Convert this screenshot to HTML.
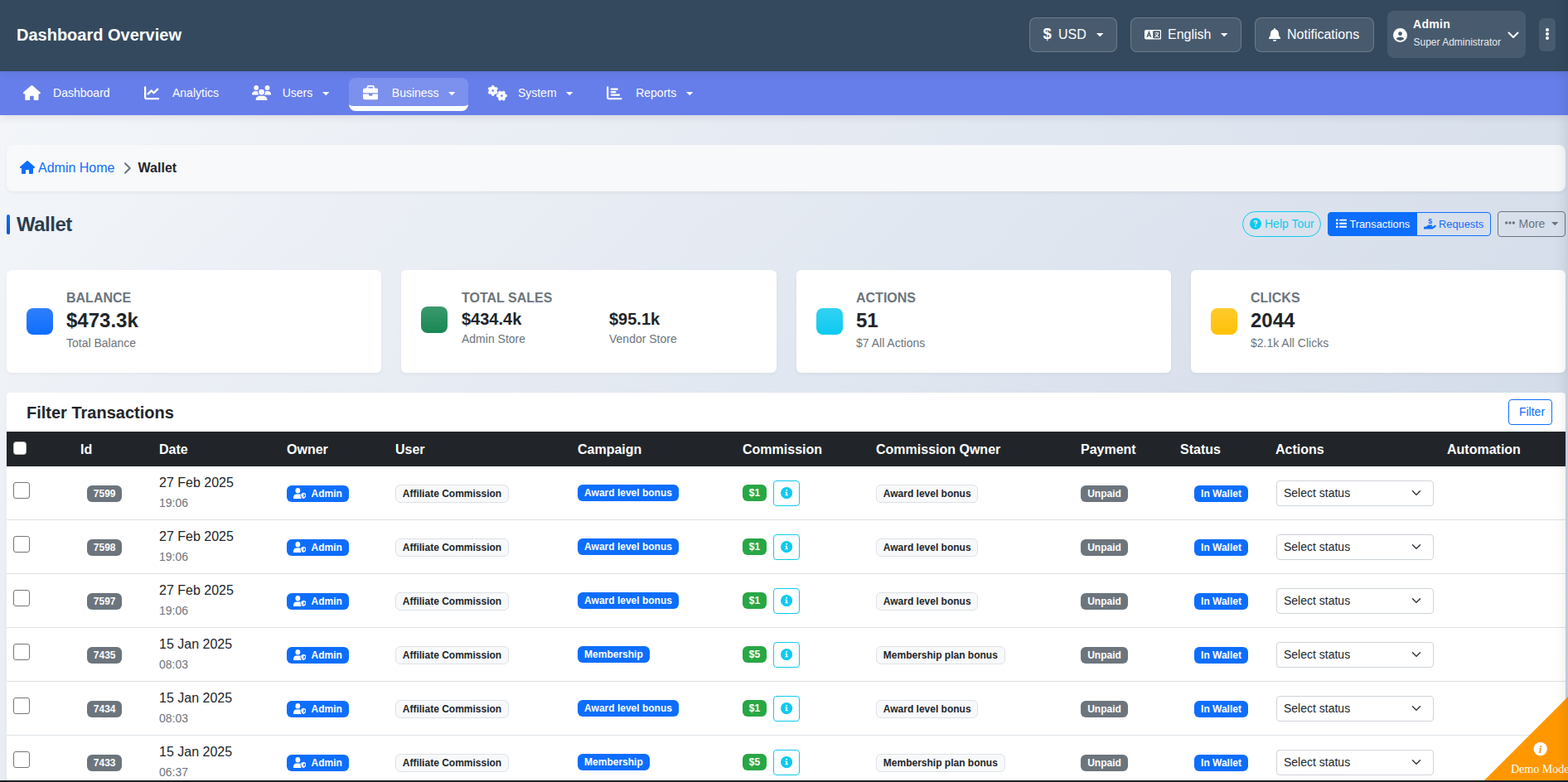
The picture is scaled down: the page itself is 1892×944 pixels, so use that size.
<!DOCTYPE html>
<html lang="en">
<head>
<meta charset="utf-8">
<title>Wallet</title>
<style>
*{box-sizing:border-box}
html,body{margin:0;padding:0}
body{width:1892px;height:944px;overflow:hidden;position:relative;font-family:"Liberation Sans",sans-serif;font-size:16px;line-height:1.5;color:#212529;background:#dfe5ef linear-gradient(135deg,#f5f7fa 0%,#c3cfe2 100%) 0 0/1892px 1640px no-repeat}
.t{position:absolute;white-space:nowrap}
/* ---------- top header ---------- */
.top{position:absolute;left:0;top:0;width:1892px;height:86px;background:#34495e;color:#fff;box-shadow:0 2px 10px rgba(0,0,0,.1);z-index:3}
.top h1{position:absolute;left:20px;top:27px;margin:0;font-size:20px;line-height:30px;font-weight:700;white-space:nowrap}
.hbtn{position:absolute;top:21px;height:42px;border:1px solid rgba(255,255,255,.2);background:rgba(255,255,255,.1);border-radius:8px;color:#fff;font-size:16px;line-height:24px}
.hbtn .t{top:8px}
.userbox{position:absolute;left:1674px;top:13px;width:167px;height:57px;background:rgba(255,255,255,.1);border-radius:8px;color:#fff}
.dots{position:absolute;left:1857px;top:22px;width:20px;height:40px;background:rgba(255,255,255,.1);border-radius:6px}
.dots i{position:absolute;left:8.100px;width:3.800px;height:3.800px;border-radius:1.900px;background:#fff}
/* ---------- nav ---------- */
.nav{z-index:2;position:absolute;left:0;top:86px;width:1892px;height:53px;background:#667eea;box-shadow:0 2px 10px rgba(0,0,0,.1);color:#fff;font-size:14px;line-height:21px}
.nav .t{top:15.500px}
.nav .act{position:absolute;top:8px;height:40px;background:rgba(255,255,255,.15);border-radius:8px;border-bottom:6px solid #fff}
/* ---------- content ---------- */
.crumb{position:absolute;left:8px;top:175px;width:1881px;height:56px;background:#f8f9fa;border-radius:8px;box-shadow:0 2px 4px rgba(0,0,0,.05)}
.crumb .t{top:16px;font-size:16px;line-height:24px}
.ptitle{position:absolute;left:8px;top:259px;width:4px;height:24px;background:linear-gradient(180deg,#0d6efd,#0a58ca);border-radius:2px}
.ptitle h2{position:absolute;left:12px;top:-6px;margin:0;font-size:24px;line-height:36px;font-weight:700;letter-spacing:-.5px;color:#2c3e50;white-space:nowrap}
.btn{position:absolute;font-size:14px;line-height:21px;white-space:nowrap}
.stat{position:absolute;top:326px;height:124px;background:#fff;border-radius:6px;box-shadow:0 2px 4px rgba(0,0,0,.04)}
.stat .ic{position:absolute;left:24px;top:46px;width:32px;height:32px;border-radius:8px}
.stat .lb{position:absolute;left:72px;top:22px;font-size:16px;line-height:24px;font-weight:700;color:#6c757d;text-transform:uppercase;white-space:nowrap}
.stat .vl{position:absolute;left:72px;top:46px;font-size:24px;line-height:29px;font-weight:700;color:#212529;white-space:nowrap}
.stat .sb{position:absolute;left:72px;top:78px;font-size:14px;line-height:21px;color:#6c757d;white-space:nowrap}
.stat .v2{top:47px;font-size:20px;line-height:24px}
.stat .s2{top:73px}
/* ---------- table card ---------- */
.tcard{position:absolute;left:8px;top:474px;width:1881px;height:480px;background:#fff;border-radius:4px 4px 0 0;box-shadow:0 2px 4px rgba(0,0,0,.04)}
.tcard h3{position:absolute;left:24px;top:9px;margin:0;font-size:20px;line-height:30px;font-weight:700;color:#212529;white-space:nowrap}
.fbtn{position:absolute;left:1812px;top:8px;width:53px;height:31px;border:1px solid #0d6efd;border-radius:4px;color:#0d6efd;font-size:14px;line-height:29px;text-align:center;padding-left:4px}
table{position:absolute;left:0;top:47px;width:1881px;border-collapse:separate;border-spacing:0;table-layout:fixed}
th{height:42px;padding:2px 8px 0;background:#212529;color:#fff;font-weight:700;font-size:16px;line-height:24px;text-align:left;white-space:nowrap;vertical-align:middle}
td{height:65px;padding:8px;border-bottom:1px solid #dee2e6;vertical-align:middle;white-space:nowrap;line-height:24px}
td small{font-size:14px;color:#6c757d}
td.c1{padding-left:16px}
td.c0{vertical-align:top;padding-top:19px}
.bd{display:inline-block;padding:4.200px 7.800px;font-size:12px;font-weight:700;line-height:1;color:#fff;text-align:center;white-space:nowrap;vertical-align:baseline;border-radius:6px}
.bg-s{background:#6c757d}.bg-p{background:#0d6efd}.bg-g{background:#28a745}
.bg-l{background:#f8f9fa;color:#212529;border:1px solid #dee2e6}
.up{position:relative;top:-1px}
.ck{display:block;width:20px;height:20px;border:1px solid #767676;border-radius:3px;background:#fff}
.hck{display:block;width:16px;height:16px;border-radius:4px;background:#fff;border:1px solid rgba(0,0,0,.25);position:relative;top:-2px}
.ib{display:inline-block;vertical-align:middle;width:32px;height:31px;border:1px solid #0dcaf0;border-radius:4px;margin-left:8px;position:relative}
.sel{display:block;position:relative;left:1px;width:190px;height:31px;border:1px solid #ced4da;border-radius:4px;background:#fff;font-size:14px;line-height:21px;padding:4px 8px;color:#212529}
.sel svg{position:absolute;right:14px;top:8.500px}
/* ---------- demo ---------- */
.demo{z-index:4;position:absolute;left:1791px;top:841px;width:101px;height:101px;overflow:hidden}
.demo .dt{position:absolute;left:32px;top:80px;font-family:"Liberation Serif",serif;font-size:14px;line-height:16px;color:#fff;white-space:nowrap}
.demo .di{position:absolute;left:59.500px;top:55.500px;width:16px;height:16px;font-weight:700;font-family:"Liberation Serif",serif;font-style:italic;font-size:13px;line-height:16px;text-align:center;color:#ff9800}
.bbar{z-index:6;position:absolute;left:0;top:942px;width:1892px;height:2px;background:#1b1e22}
.rsh{z-index:5;position:absolute;left:1892px;top:-30px;width:30px;height:1010px;box-shadow:-2px 0 16px rgba(0,0,0,.1);pointer-events:none}
</style>
</head>
<body>
<div class="top">
<h1>Dashboard Overview</h1>
<div class="hbtn" style="left:1242px;width:106px"><span class="t" style="left:15.500px;top:7px;font-size:18.500px;font-weight:700">$</span><span class="t" style="left:34px">USD</span><svg viewBox="0 0 8.4 4.4" width="8.4" height="4.4" style="position:absolute;left:80px;top:18px" fill="#fff"><path d="M0 0H8.4L4.2 4.4Z"/></svg></div>
<div class="hbtn" style="left:1364px;width:134px"><svg viewBox="0 0 20 13" width="20.400" height="11.600" preserveAspectRatio="none" style="position:absolute;left:16px;top:14.300px"><rect x="0" y="0" width="20" height="13" rx="2" fill="#fff"/><rect x="10" y="1.5" width="8.5" height="10" rx="1" fill="#485b6e"/><path d="M3 10 L5.3 3 L7.6 10 M3.9 7.6 H6.7" stroke="#485b6e" stroke-width="1.4" fill="none"/><path d="M12 4.3H17 M14.5 3V4.3 M16.3 4.3C15.8 7 14 9 12.2 9.8 M12.8 6C13.6 8 15.2 9.3 17 9.8" stroke="#fff" stroke-width="1" fill="none"/></svg><span class="t" style="left:44px">English</span><svg viewBox="0 0 8.4 4.4" width="8.4" height="4.4" style="position:absolute;left:108.2px;top:18px" fill="#fff"><path d="M0 0H8.4L4.2 4.4Z"/></svg></div>
<div class="hbtn" style="left:1514px;width:144px"><svg viewBox="0 0 448 512" width="14" height="16" style="position:absolute;left:16px;top:12px;" fill="#fff"><path d="M224 0c-17.700 0-32 14.300-32 32V51.200C119 66 64 130.600 64 208v18.800c0 47-17.300 92.400-48.500 127.600l-7.400 8.300c-8.400 9.400-10.400 22.900-5.300 34.400S19.400 416 32 416H416c12.600 0 24-7.400 29.200-18.900s3.100-25-5.300-34.400l-7.400-8.300C401.300 319.200 384 273.900 384 226.800V208c0-77.400-55-142-128-156.800V32c0-17.700-14.300-32-32-32zm45.300 493.300c12-12 18.700-28.300 18.700-45.300H224 160c0 17 6.700 33.300 18.700 45.300s28.300 18.700 45.300 18.700s33.300-6.700 45.300-18.700z"/></svg><span class="t" style="left:38px">Notifications</span></div>
<div class="userbox"><svg viewBox="0 0 512 512" width="17" height="17" style="position:absolute;left:7px;top:20.5px;" fill="#fff"><path d="M399 384.200C376.900 345.800 335.400 320 288 320H224c-47.400 0-88.900 25.800-111 64.200c35.200 39.200 86.200 63.800 143 63.800s107.800-24.700 143-63.800zM0 256a256 256 0 1 1 512 0A256 256 0 1 1 0 256zm256 16a72 72 0 1 0 0-144 72 72 0 1 0 0 144z"/></svg><span class="t" style="left:31px;top:6px;font-size:14px;font-weight:700;line-height:21px;letter-spacing:.3px">Admin</span><span class="t" style="left:31.500px;top:29px;font-size:12px;line-height:18px;color:rgba(255,255,255,.9)">Super Administrator</span><svg viewBox="0 0 14 9" width="14" height="9" style="position:absolute;left:145px;top:25px" fill="none" stroke="#fff" stroke-width="2" stroke-linecap="round" stroke-linejoin="round"><path d="M1.5 1.5L7 7L12.5 1.5"/></svg></div>
<div class="dots"><i style="top:12.400px"></i><i style="top:17.400px"></i><i style="top:22.400px"></i></div>
</div>
<div class="nav">
<div class="act" style="left:421px;width:144px"></div>
<svg viewBox="0 0 576 512" width="20.8125" height="18.5" style="position:absolute;left:27.9937px;top:16.75px;" fill="#fff"><path d="M575.8 255.5c0 18-15 32.1-32 32.1h-32l.7 160.2c0 2.7-.2 5.4-.5 8.1V472c0 22.1-17.9 40-40 40H456c-1.1 0-2.2 0-3.3-.1c-1.4 .1-2.8 .1-4.2 .1H416 392c-22.1 0-40-17.9-40-40V448 384c0-17.7-14.3-32-32-32H256c-17.7 0-32 14.3-32 32v64 24c0 22.1-17.9 40-40 40H160 128.1c-1.5 0-3-.1-4.5-.2c-1.2 .1-2.4 .2-3.6 .2H104c-22.1 0-40-17.9-40-40V360c0-.9 0-1.9 .1-2.8V287.6H32c-18 0-32-14-32-32.1c0-9 3-17 10-24L266.4 8c7-7 15-8 22-8s15 2 21 7L564.8 231.5c8 7 12 15 11 24z"/></svg>
<span class="t" style="left:64.1px">Dashboard</span>
<svg viewBox="0 0 512 512" width="18.5" height="18.5" style="position:absolute;left:173.75px;top:16.75px;" fill="#fff"><path d="M64 64c0-17.7-14.3-32-32-32S0 46.3 0 64V400c0 44.2 35.800 80 80 80H480c17.700 0 32-14.300 32-32s-14.300-32-32-32H80c-8.800 0-16-7.200-16-16V64zm406.600 86.600c12.500-12.500 12.500-32.800 0-45.300s-32.800-12.500-45.300 0L320 210.700l-57.400-57.400c-12.500-12.500-32.800-12.500-45.300 0l-112 112c-12.500 12.500-12.500 32.800 0 45.300s32.800 12.500 45.300 0L240 221.300l57.400 57.400c12.500 12.500 32.800 12.500 45.300 0l128-128z"/></svg>
<span class="t" style="left:208px">Analytics</span>
<svg viewBox="0 0 640 512" width="23.125" height="18.5" style="position:absolute;left:304.238px;top:16.75px;" fill="#fff"><path d="M144 0a80 80 0 1 1 0 160A80 80 0 1 1 144 0zM512 0a80 80 0 1 1 0 160A80 80 0 1 1 512 0zM0 298.7C0 239.8 47.8 192 106.7 192h42.7c15.9 0 31 3.500 44.600 9.700c-1.300 7.200-1.900 14.700-1.900 22.300c0 38.200 16.800 72.500 43.300 96c-.2 0-.4 0-.7 0H21.300C9.600 320 0 310.400 0 298.700zM405.300 320c-.2 0-.4 0-.7 0c26.600-23.500 43.300-57.800 43.300-96c0-7.600-.7-15-1.900-22.300c13.600-6.300 28.700-9.700 44.600-9.700h42.700C592.200 192 640 239.800 640 298.700c0 11.800-9.600 21.300-21.300 21.300H405.300zM224 224a96 96 0 1 1 192 0 96 96 0 1 1 -192 0zM128 485.300C128 411.700 187.700 352 261.300 352H378.700C452.300 352 512 411.700 512 485.300c0 14.700-11.900 26.700-26.700 26.700H154.700c-14.700 0-26.700-11.900-26.700-26.700z"/></svg>
<span class="t" style="left:340.7px">Users</span>
<svg viewBox="0 0 8.4 4.2" width="8.4" height="4.2" style="position:absolute;left:388.8px;top:25px" fill="#fff"><path d="M0 0H8.4L4.2 4.2Z"/></svg>
<svg viewBox="0 0 512 512" width="18.5" height="18.5" style="position:absolute;left:437.55px;top:16.75px;" fill="#fff"><path d="M184 48H328c4.400 0 8 3.600 8 8V96H176V56c0-4.400 3.600-8 8-8zm-56 8V96H64C28.700 96 0 124.700 0 160v96H192 320 512V160c0-35.300-28.700-64-64-64H384V56c0-30.900-25.100-56-56-56H184c-30.900 0-56 25.100-56 56zM512 288H320v32c0 17.700-14.300 32-32 32H224c-17.700 0-32-14.300-32-32V288H0V416c0 35.300 28.700 64 64 64H448c35.300 0 64-28.700 64-64V288z"/></svg>
<span class="t" style="left:472.8px">Business</span>
<svg viewBox="0 0 8.4 4.2" width="8.4" height="4.2" style="position:absolute;left:540.8px;top:25px" fill="#fff"><path d="M0 0H8.4L4.2 4.2Z"/></svg>
<svg viewBox="0 0 30 26" width="30" height="26" style="position:absolute;left:586px;top:14px" fill="#fff" fill-rule="evenodd" stroke="#fff" stroke-width=".6" stroke-linejoin="round"><path d="M10.25 14.01L9.84 15.45L7.66 15.45L7.25 14.01L5.50 13.00L4.05 13.37L2.96 11.48L4.01 10.41L4.01 8.39L2.96 7.32L4.05 5.43L5.50 5.80L7.25 4.79L7.66 3.35L9.84 3.35L10.25 4.79L12.00 5.80L13.45 5.43L14.54 7.32L13.49 8.39L13.49 10.41L14.54 11.48L13.45 13.37L12.00 13.00ZM7.15 9.40a1.60 1.60 0 1 0 3.20 0a1.60 1.60 0 1 0 -3.20 0Z"/><path d="M24.01 14.10L25.45 14.51L25.45 16.69L24.01 17.10L23.00 18.85L23.37 20.30L21.48 21.39L20.41 20.34L18.39 20.34L17.32 21.39L15.43 20.30L15.80 18.85L14.79 17.10L13.35 16.69L13.35 14.51L14.79 14.10L15.80 12.35L15.43 10.90L17.32 9.81L18.39 10.86L20.41 10.86L21.48 9.81L23.37 10.90L23.00 12.35ZM17.80 15.60a1.60 1.60 0 1 0 3.20 0a1.60 1.60 0 1 0 -3.20 0Z"/></svg>
<span class="t" style="left:624.9px">System</span>
<svg viewBox="0 0 8.4 4.2" width="8.4" height="4.2" style="position:absolute;left:683px;top:25px" fill="#fff"><path d="M0 0H8.4L4.2 4.2Z"/></svg>
<svg viewBox="0 0 512 512" width="18.5" height="18.5" style="position:absolute;left:732.25px;top:16.75px;" fill="#fff"><path d="M32 32c17.700 0 32 14.300 32 32V400c0 8.800 7.200 16 16 16H480c17.700 0 32 14.300 32 32s-14.300 32-32 32H80c-44.200 0-80-35.800-80-80V64C0 46.300 14.300 32 32 32zm96 96c0-17.700 14.300-32 32-32l192 0c17.700 0 32 14.300 32 32s-14.300 32-32 32l-192 0c-17.700 0-32-14.300-32-32zm32 64H288c17.700 0 32 14.300 32 32s-14.300 32-32 32H160c-17.700 0-32-14.300-32-32s14.300-32 32-32zm0 96H416c17.700 0 32 14.300 32 32s-14.300 32-32 32H160c-17.700 0-32-14.300-32-32s14.300-32 32-32z"/></svg>
<span class="t" style="left:767.2px">Reports</span>
<svg viewBox="0 0 8.4 4.2" width="8.4" height="4.2" style="position:absolute;left:828px;top:25px" fill="#fff"><path d="M0 0H8.4L4.2 4.2Z"/></svg>
</div>
<div class="crumb">
<svg viewBox="0 0 576 512" width="18" height="16" style="position:absolute;left:16.2px;top:18.7px;" fill="#0d6efd"><path d="M575.8 255.5c0 18-15 32.1-32 32.1h-32l.7 160.2c0 2.7-.2 5.4-.5 8.1V472c0 22.1-17.9 40-40 40H456c-1.1 0-2.2 0-3.3-.1c-1.4 .1-2.8 .1-4.2 .1H416 392c-22.1 0-40-17.9-40-40V448 384c0-17.7-14.3-32-32-32H256c-17.7 0-32 14.3-32 32v64 24c0 22.1-17.9 40-40 40H160 128.1c-1.5 0-3-.1-4.5-.2c-1.2 .1-2.4 .2-3.6 .2H104c-22.1 0-40-17.9-40-40V360c0-.9 0-1.9 .1-2.8V287.6H32c-18 0-32-14-32-32.1c0-9 3-17 10-24L266.4 8c7-7 15-8 22-8s15 2 21 7L564.8 231.5c8 7 12 15 11 24z"/></svg>
<span class="t" style="left:38px;color:#0d6efd">Admin Home</span>
<svg viewBox="0 0 10 16" width="10" height="16" style="position:absolute;left:140.700px;top:19.800px" fill="none" stroke="#6c757d" stroke-width="2" stroke-linecap="round" stroke-linejoin="round"><path d="M2 2.200L7.800 8L2 13.800"/></svg>
<span class="t" style="left:158.600px;font-weight:700;color:#212529">Wallet</span>
</div>
<div class="ptitle"><h2>Wallet</h2></div>
<div class="btn" style="left:1499px;top:255px;width:95px;height:31px;border:1px solid #0dcaf0;border-radius:16px;color:#0dcaf0"><svg viewBox="0 0 14 14" width="14" height="14" style="position:absolute;left:8px;top:6.500px"><circle cx="7" cy="7" r="7" fill="#0dcaf0"/><path d="M5.200 5.500C5.200 4.400 6 3.800 7 3.800C8 3.800 8.800 4.400 8.800 5.300C8.800 6.600 7 6.700 7 8.100" stroke="#e4e9f2" stroke-width="1.500" fill="none"/><circle cx="7" cy="10.100" r=".95" fill="#e4e9f2"/></svg><span class="t" style="left:26px;top:4px">Help Tour</span></div>
<div class="btn" style="left:1602px;top:256px;width:108px;height:29px;background:#0d6efd;border:1px solid #0d6efd;border-radius:4px 0 0 4px;color:#fff"><svg viewBox="0 0 14 12" width="13.400" height="11.400" style="position:absolute;left:8.900px;top:7.400px" fill="#fff"><rect x="0" y=".4" width="2.600" height="2.600" rx=".6"/><rect x="0" y="4.700" width="2.600" height="2.600" rx=".6"/><rect x="0" y="9" width="2.600" height="2.600" rx=".6"/><rect x="4.200" y=".7" width="9.800" height="2" rx="1"/><rect x="4.200" y="5" width="9.800" height="2" rx="1"/><rect x="4.200" y="9.300" width="9.800" height="2" rx="1"/></svg><span class="t" style="left:25.400px;top:4px;font-size:12.800px;line-height:19.200px">Transactions</span></div>
<div class="btn" style="left:1709px;top:256px;width:90px;height:29px;border:1px solid #0d6efd;border-radius:0 4px 4px 0;color:#0d6efd"><svg viewBox="0 0 16 14" width="14.800" height="13" style="position:absolute;left:7.800px;top:6.600px" fill="#0d6efd"><path d="M0 10.400h2.600l2.200-1.600c.5-.4 1.100-.6 1.700-.6h3.700c.6 0 1 .4 1 1s-.4 1-1 1H8.400v.4h3l2.700-2c.5-.4 1.200-.3 1.600.2s.3 1.200-.2 1.600l-3.300 2.500c-.5.4-1.200.6-1.800.6H0z"/><text x="8.300" y="6.900" font-family="Liberation Sans, sans-serif" font-weight="700" font-size="9.500" text-anchor="middle">$</text></svg><span class="t" style="left:26.100px;top:4px;font-size:12.800px;line-height:19.200px">Requests</span></div>
<div class="btn" style="left:1807px;top:255px;width:82px;height:31px;border:1px solid #6c757d;border-radius:4px;color:#6c757d"><svg viewBox="0 0 12 4" width="12" height="4" style="position:absolute;left:8.300px;top:11.400px" fill="#6c757d"><circle cx="1.700" cy="2" r="1.650"/><circle cx="6" cy="2" r="1.650"/><circle cx="10.300" cy="2" r="1.650"/></svg><span class="t" style="left:24.500px;top:4px">More</span><svg viewBox="0 0 8.4 4.2" width="8.4" height="4.2" style="position:absolute;left:63.5px;top:12.3px" fill="#6c757d"><path d="M0 0H8.4L4.2 4.2Z"/></svg></div>
<div class="stat" style="left:8px;width:452px"><div class="ic" style="background:linear-gradient(180deg,#307ffd,#0d6efd)"></div><div class="lb">Balance</div><div class="vl">$473.3k</div><div class="sb">Total Balance</div></div>
<div class="stat" style="left:484px;width:453px"><div class="ic" style="top:44px;background:linear-gradient(180deg,#3b996d,#198754)"></div><div class="lb" style="left:73px">Total Sales</div><div class="vl v2" style="left:73px">$434.4k</div><div class="sb s2" style="left:73px">Admin Store</div><div class="vl v2" style="left:251px">$95.1k</div><div class="sb s2" style="left:251px">Vendor Store</div></div>
<div class="stat" style="left:961px;width:452px"><div class="ic" style="background:linear-gradient(180deg,#31d2f2,#0dcaf0)"></div><div class="lb">Actions</div><div class="vl">51</div><div class="sb">$7 All Actions</div></div>
<div class="stat" style="left:1437px;width:452px"><div class="ic" style="background:linear-gradient(180deg,#ffca2c,#ffc107)"></div><div class="lb">Clicks</div><div class="vl">2044</div><div class="sb">$2.1k All Clicks</div></div>
<div class="tcard">
<h3>Filter Transactions</h3>
<div class="fbtn">Filter</div>
<table>
<colgroup><col style="width:81px"><col style="width:95px"><col style="width:154px"><col style="width:131px"><col style="width:220px"><col style="width:199px"><col style="width:161px"><col style="width:247px"><col style="width:120px"><col style="width:115px"><col style="width:207px"><col style="width:151px"></colgroup>
<thead><tr><th><span class="hck"></span></th><th>Id</th><th>Date</th><th>Owner</th><th>User</th><th>Campaign</th><th>Commission</th><th>Commission Qwner</th><th>Payment</th><th>Status</th><th>Actions</th><th>Automation</th></tr></thead>
<tbody>
<tr><td class="c0"><span class="ck"></span></td><td class="c1"><span class="bd bg-s">7599</span></td><td class="c2">27 Feb 2025<br><small>19:06</small></td><td><span class="bd bg-p" style="position:relative;padding-left:29.600px"><svg viewBox="0 0 16 12" width="15.300" height="13" preserveAspectRatio="none" style="position:absolute;left:8px;top:3.300px" fill="#fff"><circle cx="5.600" cy="3" r="3"/><path d="M0 12V10.600C0 8.600 1.600 7 3.600 7H7.600C8.100 7 8.600 7.100 9 7.300V9.300C9 10.400 9.500 11.300 10.200 12Z"/><path fill-rule="evenodd" d="M12.900 5.200L16 6.500V8.300C16 10 14.700 11.500 12.900 12C11.100 11.500 9.800 10 9.800 8.300V6.500ZM12.900 6.700V10.600C13.900 10.200 14.700 9.300 14.700 8.300V7.400Z"/></svg>Admin</span></td><td><span class="bd bg-l">Affiliate Commission</span></td><td><span class="bd bg-p up" style="padding-left:8.100px;padding-right:8.100px">Award level bonus</span></td><td><span class="bd bg-g">$1</span><span class="ib"><svg viewBox="0 0 14 14" width="14.200" height="14.200" style="position:absolute;left:7.700px;top:7.200px"><circle cx="7" cy="7" r="7" fill="#0dcaf0"/><circle cx="7" cy="3.700" r="1.050" fill="#fff"/><path d="M5.400 5.700H7.950V9.100H8.800V10.200H5.300V9.100H6.200V6.800H5.400Z" fill="#fff"/></svg></span></td><td><span class="bd bg-l">Award level bonus</span></td><td><span class="bd bg-s" style="padding-left:8.150px;padding-right:8.150px">Unpaid</span></td><td style="text-align:center"><span class="bd bg-p">In Wallet</span></td><td><span class="sel">Select status<svg viewBox="0 0 16 16" width="12" height="12" fill="none" stroke="#343a40" stroke-width="2" stroke-linecap="round" stroke-linejoin="round"><path d="M2 5l6 6 6-6"/></svg></span></td><td></td></tr>
<tr><td class="c0"><span class="ck"></span></td><td class="c1"><span class="bd bg-s">7598</span></td><td class="c2">27 Feb 2025<br><small>19:06</small></td><td><span class="bd bg-p" style="position:relative;padding-left:29.600px"><svg viewBox="0 0 16 12" width="15.300" height="13" preserveAspectRatio="none" style="position:absolute;left:8px;top:3.300px" fill="#fff"><circle cx="5.600" cy="3" r="3"/><path d="M0 12V10.600C0 8.600 1.600 7 3.600 7H7.600C8.100 7 8.600 7.100 9 7.300V9.300C9 10.400 9.500 11.300 10.200 12Z"/><path fill-rule="evenodd" d="M12.900 5.200L16 6.500V8.300C16 10 14.700 11.500 12.900 12C11.100 11.500 9.800 10 9.800 8.300V6.500ZM12.900 6.700V10.600C13.900 10.200 14.700 9.300 14.700 8.300V7.400Z"/></svg>Admin</span></td><td><span class="bd bg-l">Affiliate Commission</span></td><td><span class="bd bg-p up" style="padding-left:8.100px;padding-right:8.100px">Award level bonus</span></td><td><span class="bd bg-g">$1</span><span class="ib"><svg viewBox="0 0 14 14" width="14.200" height="14.200" style="position:absolute;left:7.700px;top:7.200px"><circle cx="7" cy="7" r="7" fill="#0dcaf0"/><circle cx="7" cy="3.700" r="1.050" fill="#fff"/><path d="M5.400 5.700H7.950V9.100H8.800V10.200H5.300V9.100H6.200V6.800H5.400Z" fill="#fff"/></svg></span></td><td><span class="bd bg-l">Award level bonus</span></td><td><span class="bd bg-s" style="padding-left:8.150px;padding-right:8.150px">Unpaid</span></td><td style="text-align:center"><span class="bd bg-p">In Wallet</span></td><td><span class="sel">Select status<svg viewBox="0 0 16 16" width="12" height="12" fill="none" stroke="#343a40" stroke-width="2" stroke-linecap="round" stroke-linejoin="round"><path d="M2 5l6 6 6-6"/></svg></span></td><td></td></tr>
<tr><td class="c0"><span class="ck"></span></td><td class="c1"><span class="bd bg-s">7597</span></td><td class="c2">27 Feb 2025<br><small>19:06</small></td><td><span class="bd bg-p" style="position:relative;padding-left:29.600px"><svg viewBox="0 0 16 12" width="15.300" height="13" preserveAspectRatio="none" style="position:absolute;left:8px;top:3.300px" fill="#fff"><circle cx="5.600" cy="3" r="3"/><path d="M0 12V10.600C0 8.600 1.600 7 3.600 7H7.600C8.100 7 8.600 7.100 9 7.300V9.300C9 10.400 9.500 11.300 10.200 12Z"/><path fill-rule="evenodd" d="M12.900 5.200L16 6.500V8.300C16 10 14.700 11.500 12.900 12C11.100 11.500 9.800 10 9.800 8.300V6.500ZM12.900 6.700V10.600C13.900 10.200 14.700 9.300 14.700 8.300V7.400Z"/></svg>Admin</span></td><td><span class="bd bg-l">Affiliate Commission</span></td><td><span class="bd bg-p up" style="padding-left:8.100px;padding-right:8.100px">Award level bonus</span></td><td><span class="bd bg-g">$1</span><span class="ib"><svg viewBox="0 0 14 14" width="14.200" height="14.200" style="position:absolute;left:7.700px;top:7.200px"><circle cx="7" cy="7" r="7" fill="#0dcaf0"/><circle cx="7" cy="3.700" r="1.050" fill="#fff"/><path d="M5.400 5.700H7.950V9.100H8.800V10.200H5.300V9.100H6.200V6.800H5.400Z" fill="#fff"/></svg></span></td><td><span class="bd bg-l">Award level bonus</span></td><td><span class="bd bg-s" style="padding-left:8.150px;padding-right:8.150px">Unpaid</span></td><td style="text-align:center"><span class="bd bg-p">In Wallet</span></td><td><span class="sel">Select status<svg viewBox="0 0 16 16" width="12" height="12" fill="none" stroke="#343a40" stroke-width="2" stroke-linecap="round" stroke-linejoin="round"><path d="M2 5l6 6 6-6"/></svg></span></td><td></td></tr>
<tr><td class="c0"><span class="ck"></span></td><td class="c1"><span class="bd bg-s">7435</span></td><td class="c2">15 Jan 2025<br><small>08:03</small></td><td><span class="bd bg-p" style="position:relative;padding-left:29.600px"><svg viewBox="0 0 16 12" width="15.300" height="13" preserveAspectRatio="none" style="position:absolute;left:8px;top:3.300px" fill="#fff"><circle cx="5.600" cy="3" r="3"/><path d="M0 12V10.600C0 8.600 1.600 7 3.600 7H7.600C8.100 7 8.600 7.100 9 7.300V9.300C9 10.400 9.500 11.300 10.200 12Z"/><path fill-rule="evenodd" d="M12.900 5.200L16 6.500V8.300C16 10 14.700 11.500 12.900 12C11.100 11.500 9.800 10 9.800 8.300V6.500ZM12.900 6.700V10.600C13.900 10.200 14.700 9.300 14.700 8.300V7.400Z"/></svg>Admin</span></td><td><span class="bd bg-l">Affiliate Commission</span></td><td><span class="bd bg-p up" style="padding-left:8.100px;padding-right:8.100px">Membership</span></td><td><span class="bd bg-g">$5</span><span class="ib"><svg viewBox="0 0 14 14" width="14.200" height="14.200" style="position:absolute;left:7.700px;top:7.200px"><circle cx="7" cy="7" r="7" fill="#0dcaf0"/><circle cx="7" cy="3.700" r="1.050" fill="#fff"/><path d="M5.400 5.700H7.950V9.100H8.800V10.200H5.300V9.100H6.200V6.800H5.400Z" fill="#fff"/></svg></span></td><td><span class="bd bg-l">Membership plan bonus</span></td><td><span class="bd bg-s" style="padding-left:8.150px;padding-right:8.150px">Unpaid</span></td><td style="text-align:center"><span class="bd bg-p">In Wallet</span></td><td><span class="sel">Select status<svg viewBox="0 0 16 16" width="12" height="12" fill="none" stroke="#343a40" stroke-width="2" stroke-linecap="round" stroke-linejoin="round"><path d="M2 5l6 6 6-6"/></svg></span></td><td></td></tr>
<tr><td class="c0"><span class="ck"></span></td><td class="c1"><span class="bd bg-s">7434</span></td><td class="c2">15 Jan 2025<br><small>08:03</small></td><td><span class="bd bg-p" style="position:relative;padding-left:29.600px"><svg viewBox="0 0 16 12" width="15.300" height="13" preserveAspectRatio="none" style="position:absolute;left:8px;top:3.300px" fill="#fff"><circle cx="5.600" cy="3" r="3"/><path d="M0 12V10.600C0 8.600 1.600 7 3.600 7H7.600C8.100 7 8.600 7.100 9 7.300V9.300C9 10.400 9.500 11.300 10.200 12Z"/><path fill-rule="evenodd" d="M12.900 5.200L16 6.500V8.300C16 10 14.700 11.500 12.900 12C11.100 11.500 9.800 10 9.800 8.300V6.500ZM12.900 6.700V10.600C13.900 10.200 14.700 9.300 14.700 8.300V7.400Z"/></svg>Admin</span></td><td><span class="bd bg-l">Affiliate Commission</span></td><td><span class="bd bg-p up" style="padding-left:8.100px;padding-right:8.100px">Award level bonus</span></td><td><span class="bd bg-g">$1</span><span class="ib"><svg viewBox="0 0 14 14" width="14.200" height="14.200" style="position:absolute;left:7.700px;top:7.200px"><circle cx="7" cy="7" r="7" fill="#0dcaf0"/><circle cx="7" cy="3.700" r="1.050" fill="#fff"/><path d="M5.400 5.700H7.950V9.100H8.800V10.200H5.300V9.100H6.200V6.800H5.400Z" fill="#fff"/></svg></span></td><td><span class="bd bg-l">Award level bonus</span></td><td><span class="bd bg-s" style="padding-left:8.150px;padding-right:8.150px">Unpaid</span></td><td style="text-align:center"><span class="bd bg-p">In Wallet</span></td><td><span class="sel">Select status<svg viewBox="0 0 16 16" width="12" height="12" fill="none" stroke="#343a40" stroke-width="2" stroke-linecap="round" stroke-linejoin="round"><path d="M2 5l6 6 6-6"/></svg></span></td><td></td></tr>
<tr><td class="c0"><span class="ck"></span></td><td class="c1"><span class="bd bg-s">7433</span></td><td class="c2">15 Jan 2025<br><small>06:37</small></td><td><span class="bd bg-p" style="position:relative;padding-left:29.600px"><svg viewBox="0 0 16 12" width="15.300" height="13" preserveAspectRatio="none" style="position:absolute;left:8px;top:3.300px" fill="#fff"><circle cx="5.600" cy="3" r="3"/><path d="M0 12V10.600C0 8.600 1.600 7 3.600 7H7.600C8.100 7 8.600 7.100 9 7.300V9.300C9 10.400 9.500 11.300 10.200 12Z"/><path fill-rule="evenodd" d="M12.900 5.200L16 6.500V8.300C16 10 14.700 11.500 12.900 12C11.100 11.500 9.800 10 9.800 8.300V6.500ZM12.900 6.700V10.600C13.900 10.200 14.700 9.300 14.700 8.300V7.400Z"/></svg>Admin</span></td><td><span class="bd bg-l">Affiliate Commission</span></td><td><span class="bd bg-p up" style="padding-left:8.100px;padding-right:8.100px">Membership</span></td><td><span class="bd bg-g">$5</span><span class="ib"><svg viewBox="0 0 14 14" width="14.200" height="14.200" style="position:absolute;left:7.700px;top:7.200px"><circle cx="7" cy="7" r="7" fill="#0dcaf0"/><circle cx="7" cy="3.700" r="1.050" fill="#fff"/><path d="M5.400 5.700H7.950V9.100H8.800V10.200H5.300V9.100H6.200V6.800H5.400Z" fill="#fff"/></svg></span></td><td><span class="bd bg-l">Membership plan bonus</span></td><td><span class="bd bg-s" style="padding-left:8.150px;padding-right:8.150px">Unpaid</span></td><td style="text-align:center"><span class="bd bg-p">In Wallet</span></td><td><span class="sel">Select status<svg viewBox="0 0 16 16" width="12" height="12" fill="none" stroke="#343a40" stroke-width="2" stroke-linecap="round" stroke-linejoin="round"><path d="M2 5l6 6 6-6"/></svg></span></td><td></td></tr>
</tbody></table></div>
<div class="demo"><svg viewBox="0 0 101 101" width="101" height="101" style="position:absolute;left:0;top:0"><path d="M101 0V101H0Z" fill="#ff9800"/><circle cx="67.700" cy="63.100" r="8.200" fill="#fff"/></svg><span class="di">i</span><span class="dt">Demo Mode</span></div>
<div class="rsh"></div>
<div class="bbar"></div>
</body>
</html>
